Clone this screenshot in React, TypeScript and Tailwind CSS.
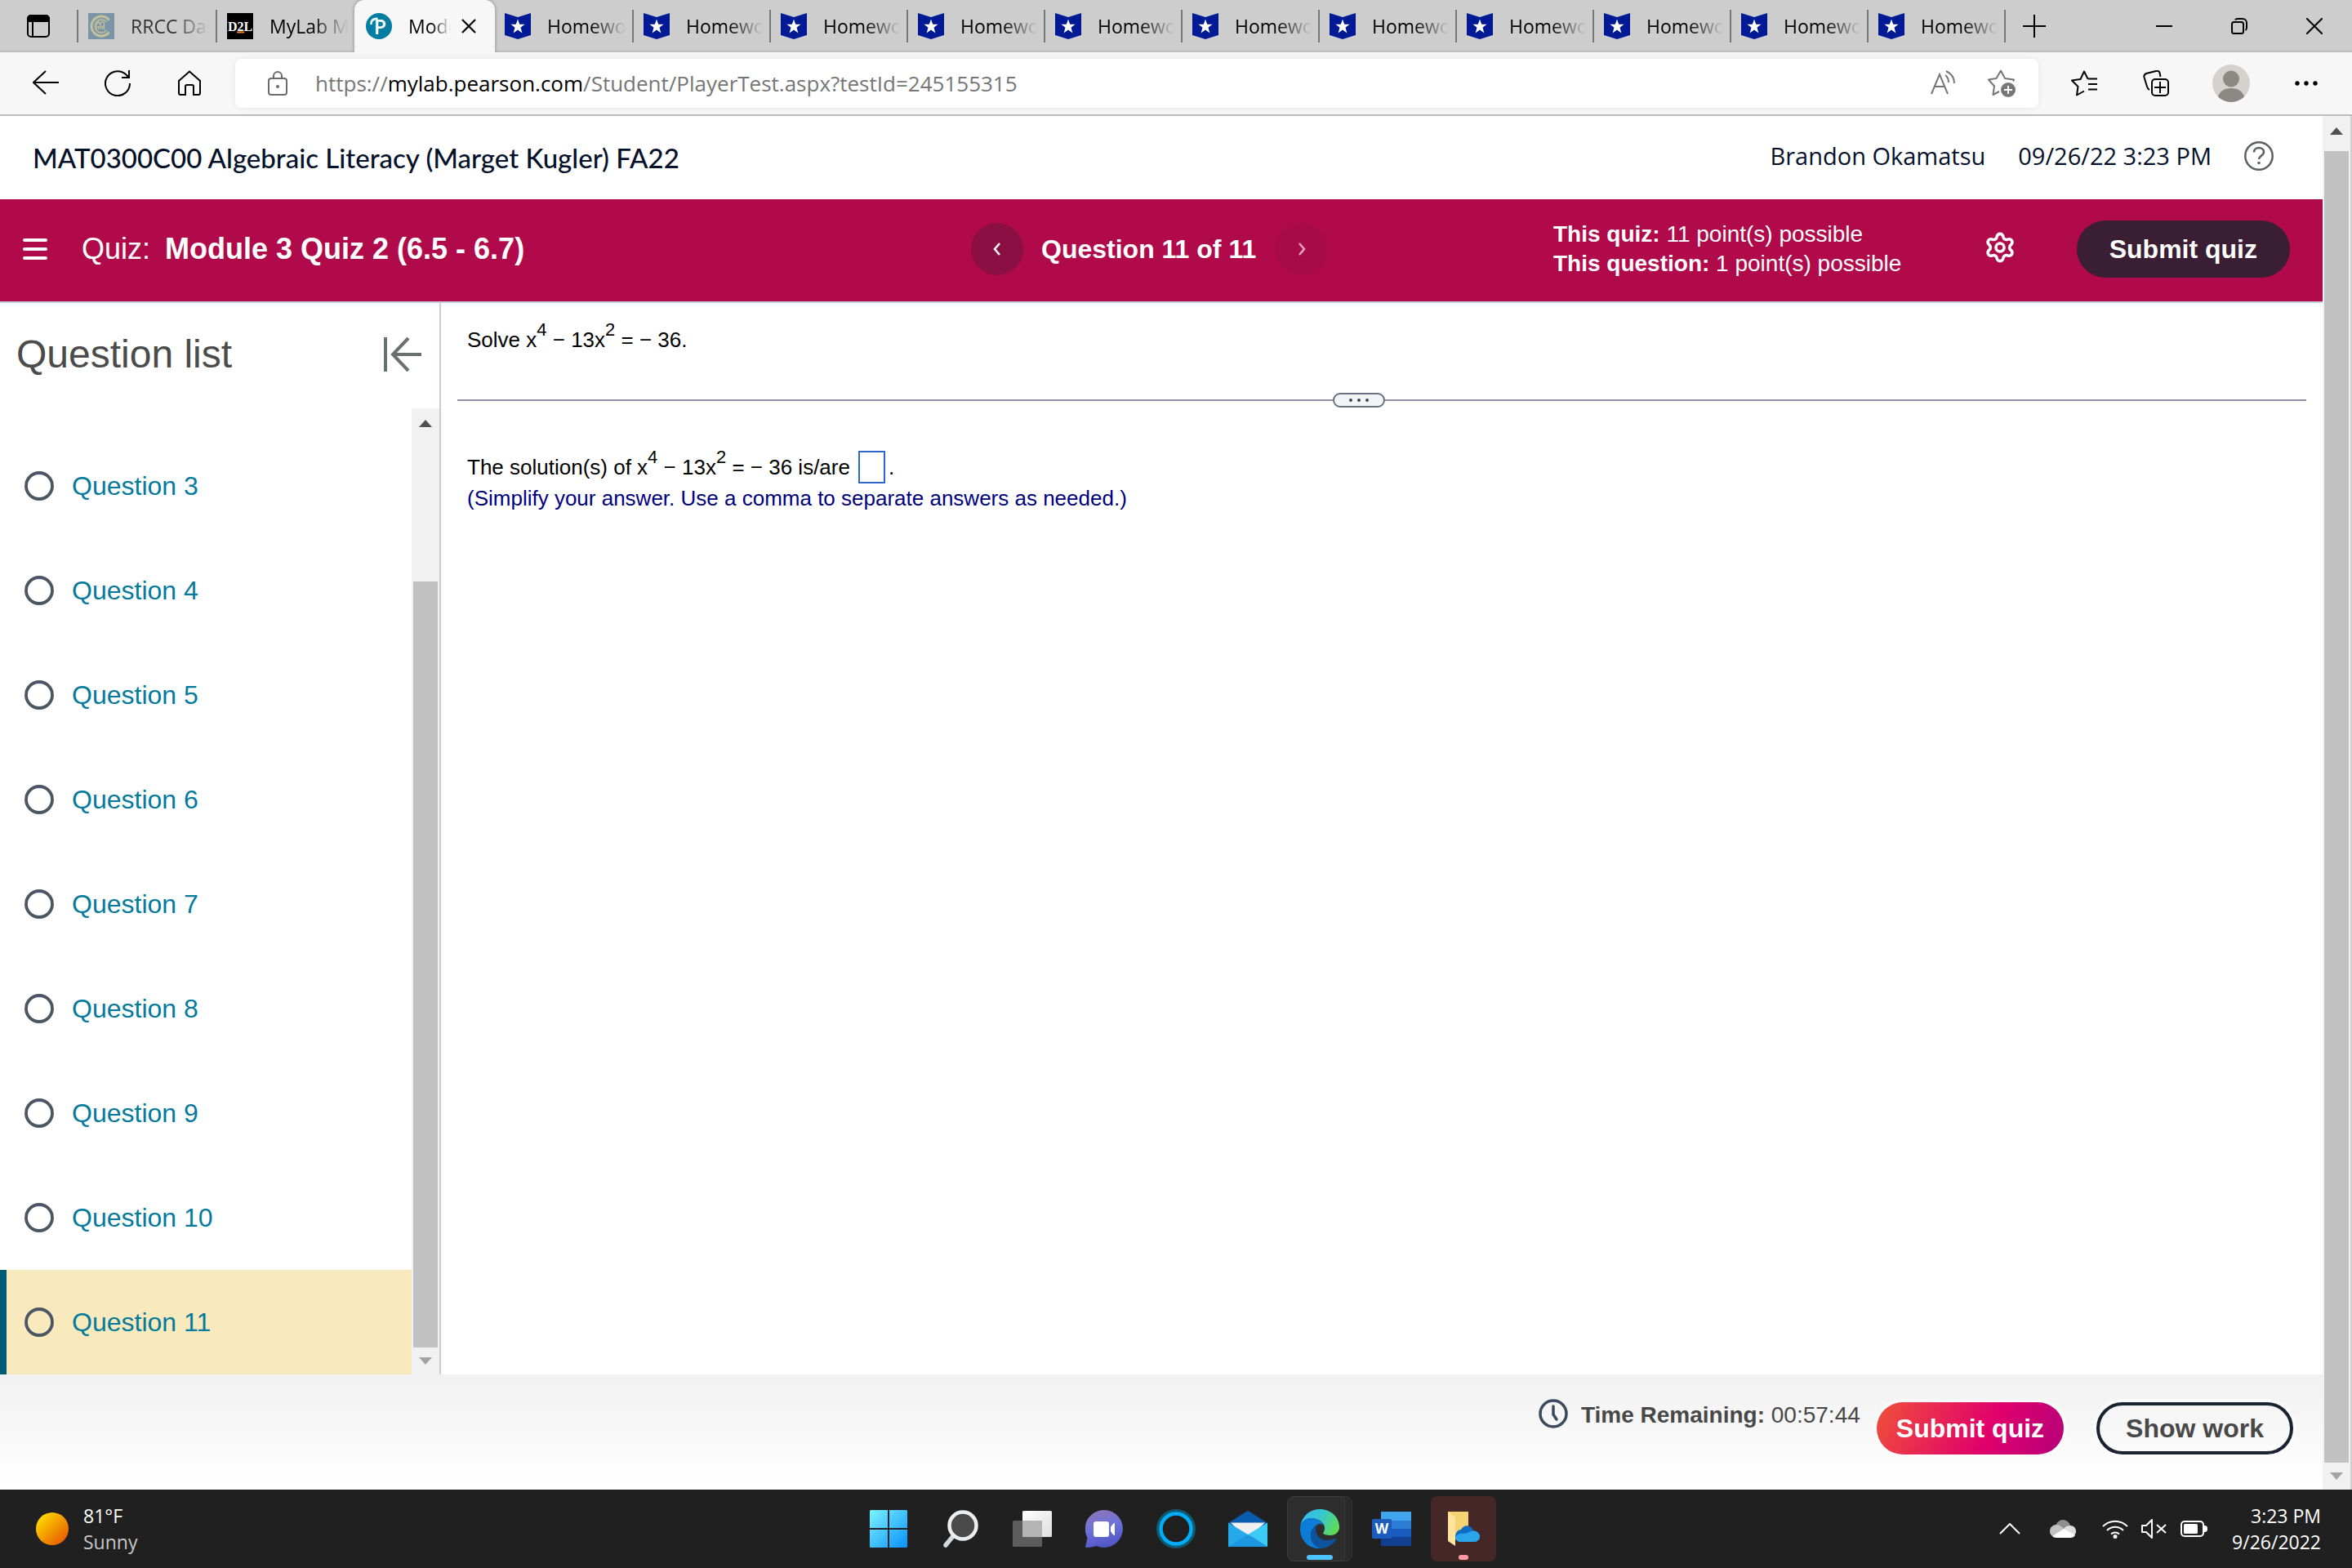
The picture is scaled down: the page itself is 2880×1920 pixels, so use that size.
import type { ReactNode } from 'react'
import { Settings } from 'lucide-react'

const questions = [3, 4, 5, 6, 7, 8, 9, 10, 11]
const currentQuestion = 11
const homeworkTabs = Array.from({ length: 11 }, (_, i) => i)

/* ---------- browser tab strip ---------- */

function RrccIcon() {
  return (
    <svg viewBox="0 0 32 32" className="size-8 shrink-0" fill="none" stroke="#c4c19c">
      <rect width="32" height="32" fill="#7b94a6" stroke="none" />
      <path d="M25.500 8.500a12 12 0 1 0 0 15" strokeWidth="3" />
      <path d="M22.500 11a8 8 0 1 0 0 10" strokeWidth="1.500" />
      <path d="M10 20v-6l2.500-3 2.500 3v6M15 20v-8l2.500-2 2 2v8M9.500 17h10M12.500 20v-4M17.500 20v-5" strokeWidth="1.200" />
    </svg>
  )
}

function D2lIcon() {
  return (
    <svg viewBox="0 0 32 32" className="size-8 shrink-0">
      <rect width="32" height="32" fill="#000" />
      <text x="16" y="21.500" textAnchor="middle" fontFamily="Liberation Serif, serif" fontWeight="bold" fontSize="16" fill="#fff">
        D2L
      </text>
      <rect x="12" y="22.500" width="9" height="2" fill="#f5821f" />
    </svg>
  )
}

function PearsonIcon() {
  return (
    <svg viewBox="0 0 32 32" className="size-8 shrink-0">
      <circle cx="16" cy="16" r="16" fill="#047da3" />
      <text x="17.500" y="26" textAnchor="middle" fontFamily="Open Sans, sans-serif" fontWeight="600" fontSize="25" fill="#fff">
        P
      </text>
      <path d="M6.500 13c0-4 3-6 7-6.200" fill="none" stroke="#fff" strokeWidth="2.500" strokeLinecap="round" />
    </svg>
  )
}

function BadgeIcon() {
  return (
    <svg viewBox="0 0 32 32" className="size-8 shrink-0">
      <path d="M0 0 16 5 32 0v27l-16 5-16-5z" fill="#001a96" />
      <path d="m16 7.500 2.200 6.300h6.300l-5 4 1.900 6.700-5.400-4-5.400 4 1.900-6.700-5-4h6.300z" fill="#fff" />
    </svg>
  )
}

function Tab({ icon, title, faded, className }: { icon: ReactNode; title: string; faded?: boolean; className: string }) {
  return (
    <button className={`flex shrink-0 items-center gap-5 pl-3 pr-2 ${className}`}>
      {icon}
      <span
        className={`min-w-0 flex-1 overflow-hidden text-left text-[23px] leading-8 whitespace-nowrap [mask-image:linear-gradient(to_right,black_55%,transparent)] ${
          faded ? 'text-[#333]' : 'text-black'
        }`}
      >
        {title}
      </span>
    </button>
  )
}

function Separator() {
  return <div className="h-10 w-0.5 shrink-0 self-center bg-[#777]" />
}

function TabStrip() {
  return (
    <div className="flex h-16 items-stretch bg-[#cdcdcd] shadow-[inset_0_-2px_0_#bcbcbc]">
      <button aria-label="Tab actions" className="flex w-[94px] shrink-0 items-center justify-center">
        <svg viewBox="0 0 28 28" className="size-7" fill="none" stroke="#000" strokeWidth="2">
          <rect x="1" y="1" width="26" height="26" rx="4" />
          <path d="M1 8V5a4 4 0 0 1 4-4h18a4 4 0 0 1 4 4v3z" fill="#000" />
          <path d="M7 8v19" />
        </svg>
      </button>
      <Separator />
      <Tab icon={<RrccIcon />} title="RRCC Dashboard" faded className="w-[168px]" />
      <Separator />
      <Tab icon={<D2lIcon />} title="MyLab Math" className="w-[168px]" />
      <div className="flex w-[172px] shrink-0 items-center rounded-t-xl bg-[#f7f7f7] pl-0.5 shadow-[0_0_4px_rgba(0,0,0,0.35)] [clip-path:inset(-4px_-4px_0_-4px)]">
        <Tab icon={<PearsonIcon />} title="Module 3" className="w-[124px]" />
        <button aria-label="Close tab" className="flex h-10 w-7 items-center justify-center">
          <svg viewBox="0 0 18 18" className="size-[18px]" stroke="#000" strokeWidth="2.200">
            <path d="m1 1 16 16M17 1 1 17" />
          </svg>
        </button>
      </div>
      {homeworkTabs.map((n) => (
        <div key={n} className="flex shrink-0">
          <Tab icon={<BadgeIcon />} title="Homework" className={n === 0 ? 'w-[168px]' : 'w-[166px]'} />
          <Separator />
        </div>
      ))}
      <button aria-label="New tab" className="flex w-[70px] items-center justify-center">
        <svg viewBox="0 0 28 28" className="size-7" stroke="#000" strokeWidth="2">
          <path d="M14 0v28M0 14h28" />
        </svg>
      </button>
      <div className="flex-1" />
      <button aria-label="Minimize" className="flex w-[92px] items-center justify-center">
        <svg viewBox="0 0 20 20" className="size-5" stroke="#000" strokeWidth="2">
          <path d="M0 10h20" />
        </svg>
      </button>
      <button aria-label="Restore" className="flex w-[92px] items-center justify-center">
        <svg viewBox="0 0 20 20" className="size-5" fill="none" stroke="#000" strokeWidth="2">
          <rect x="1" y="5" width="14" height="14" rx="2.500" />
          <path d="M5 2.500C5.500 1.500 6.500 1 8 1h6a5 5 0 0 1 5 5v6c0 1.500-.5 2.500-1.500 3" />
        </svg>
      </button>
      <button aria-label="Close" className="flex w-[92px] items-center justify-center">
        <svg viewBox="0 0 20 20" className="size-5" stroke="#000" strokeWidth="2">
          <path d="m0 0 20 20M20 0 0 20" />
        </svg>
      </button>
    </div>
  )
}

/* ---------- toolbar ---------- */

function ToolButton({ label, className = 'w-[88px]', children }: { label: string; className?: string; children: ReactNode }) {
  return (
    <button aria-label={label} className={`flex h-full shrink-0 items-center justify-center ${className}`}>
      {children}
    </button>
  )
}

function Toolbar() {
  return (
    <div className="flex h-[78px] items-center border-b-2 border-[#bdbdbd] bg-[#f7f7f7] px-3">
      <ToolButton label="Back">
        <svg viewBox="0 0 32 32" className="size-8" fill="none" stroke="#000" strokeWidth="2">
          <path d="M32 15H1M16 1 1 15l15 14" />
        </svg>
      </ToolButton>
      <ToolButton label="Refresh">
        <svg viewBox="0 0 32 32" className="size-8" fill="none" stroke="#000" strokeWidth="2">
          <path d="M31 16A15 15 0 1 1 26 5l4 4" />
          <path d="M30 0v9h-9" />
        </svg>
      </ToolButton>
      <ToolButton label="Home">
        <svg viewBox="0 0 32 32" className="size-8" fill="none" stroke="#000" strokeWidth="2">
          <path d="M3 13 16 1.500 29 13v15a2 2 0 0 1-2 2h-6V20a2 2 0 0 0-2-2h-6a2 2 0 0 0-2 2v10H5a2 2 0 0 1-2-2z" />
        </svg>
      </ToolButton>
      <div className="mx-3 flex h-15 flex-1 items-center rounded-lg bg-white shadow-[0_0_8px_rgba(0,0,0,0.08)]">
        <ToolButton label="Site information" className="w-[98px] pl-1.5">
          <svg viewBox="0 0 24 30" className="h-[30px] w-6" fill="none" stroke="#6b6b6b" strokeWidth="2">
            <rect x="1" y="9" width="22" height="20" rx="3" />
            <path d="M7 9V6a5 5 0 0 1 10 0v3" />
            <circle cx="12" cy="19" r="2" fill="#6b6b6b" stroke="none" />
          </svg>
        </ToolButton>
        <div className="flex-1 text-[26px] leading-9 text-[#767676]">
          https://<span className="text-black">mylab.pearson.com</span>/Student/PlayerTest.aspx?testId=245155315
        </div>
        <ToolButton label="Read aloud" className="w-[72px]">
          <svg viewBox="0 0 32 32" className="size-8" fill="none" stroke="#767676" strokeWidth="2">
            <path d="M1 29 11 5l10 24M5 20h12" />
            <path d="M18 6c3 2 4 5 4 9M19 1c6 3 10 8 10 15" />
          </svg>
        </ToolButton>
        <ToolButton label="Add to favorites" className="w-20 pr-2.5">
          <svg viewBox="0 0 34 34" className="size-[34px]" fill="none" stroke="#767676" strokeWidth="2">
            <path d="M14 27 6.500 31 8 20.500 1 12.500l9.500-1.500L16 1.500 21 11l11 1.500-1 2" strokeLinejoin="round" />
            <circle cx="25" cy="25" r="9" fill="#767676" stroke="none" />
            <path d="M25 20v10M20 25h10" stroke="#fff" />
          </svg>
        </ToolButton>
      </div>
      <ToolButton label="Favorites">
        <svg viewBox="0 0 32 32" className="size-8" fill="none" stroke="#000" strokeWidth="2" strokeLinejoin="round">
          <path d="M20.500 10.500 16 1.500l-4.500 9.500L1 12.500 8.500 20 7 30.500l9-5" />
          <path d="M20.500 10.500H32M21 17h11M21 23.500h11" />
        </svg>
      </ToolButton>
      <ToolButton label="Collections">
        <svg viewBox="0 0 32 32" className="size-8" fill="none" stroke="#000" strokeWidth="2">
          <rect x="11" y="11" width="20" height="20" rx="4" />
          <path d="M21 14v14M14 21h14" />
          <path d="M8 24c-2-1-2.500-2-3-4L1.500 8.500C1 6.500 2 5 4 4l12-3c2-.5 4 0 4.500 2l1 5" />
        </svg>
      </ToolButton>
      <ToolButton label="Profile" className="w-24">
        <svg viewBox="0 0 46 46" className="size-[46px]">
          <circle cx="23" cy="23" r="23" fill="#d3d2ce" />
          <circle cx="23" cy="17.500" r="10" fill="#8c8884" />
          <path d="M7 39.500c2-7 8-10.500 16-10.500s14 3.500 16 10.500A23 23 0 0 1 7 39.500z" fill="#8c8884" />
        </svg>
      </ToolButton>
      <ToolButton label="Settings and more">
        <svg viewBox="0 0 28 6" className="h-1.5 w-7" fill="#000">
          <circle cx="3" cy="3" r="2.700" />
          <circle cx="14" cy="3" r="2.700" />
          <circle cx="25" cy="3" r="2.700" />
        </svg>
      </ToolButton>
    </div>
  )
}

/* ---------- quiz page ---------- */

function PageHeader() {
  return (
    <header className="flex h-[102px] shrink-0 items-center pr-15 pl-10 text-[#05112a]">
      <h1 className="flex-1 font-['Lato',sans-serif] text-[33px] leading-10 font-medium">MAT0300C00 Algebraic Literacy (Marget Kugler) FA22</h1>
      <div className="flex items-center pb-1 text-[29px] leading-10">
        <span className="mr-10">Brandon Okamatsu</span>
        <span className="mr-10">09/26/22 3:23 PM</span>
        <button aria-label="Help">
          <svg viewBox="0 0 36 36" className="size-9" fill="none" stroke="#5a6161" strokeWidth="2.500">
            <circle cx="18" cy="18" r="16.700" />
            <path d="M12 13.500c0-3.500 2.500-5.500 6-5.500s6 2 6 5c0 5-6 4.500-6 9" />
            <circle cx="18" cy="26.500" r="1.800" fill="#5a6161" stroke="none" />
          </svg>
        </button>
      </div>
    </header>
  )
}

function QuizBar() {
  return (
    <div className="grid h-[127px] shrink-0 grid-cols-[1189fr_713fr_942fr] items-center border-b-2 border-[#c7cddb] bg-[#b00a4a] pb-1 text-white">
      <div className="flex items-center pl-7 text-4xl">
        <button aria-label="Menu" className="mr-[42px]">
          <svg viewBox="0 0 30 28" className="h-7 w-[30px]" stroke="#fff" strokeWidth="4" strokeLinecap="round">
            <path d="M2 3h26M2 14h26M2 25h26" />
          </svg>
        </button>
        <span>Quiz:</span>
        <span className="ml-4.5 font-bold">Module 3 Quiz 2 (6.5 - 6.7)</span>
      </div>
      <div className="flex items-center">
        <button aria-label="Previous question" className="flex size-16 items-center justify-center rounded-full bg-[#8b0f42]">
          <svg viewBox="0 0 10 16" className="h-4 w-2.5" fill="none" stroke="#fff" strokeWidth="2.500">
            <path d="M8 1 2 8l6 7" />
          </svg>
        </button>
        <span className="mr-6 ml-[22px] text-[32px] leading-9 font-bold">Question 11 of 11</span>
        <button aria-label="Next question" disabled className="flex size-16 items-center justify-center rounded-full bg-[#a70b48]">
          <svg viewBox="0 0 10 16" className="h-4 w-2.5" fill="none" stroke="#e6a5bd" strokeWidth="2.500">
            <path d="m2 1 6 7-6 7" />
          </svg>
        </button>
      </div>
      <div className="flex items-center pr-10">
        <div className="flex-1 text-[28px] leading-9">
          <div>
            <b>This quiz:</b> 11 point(s) possible
          </div>
          <div>
            <b>This question:</b> 1 point(s) possible
          </div>
        </div>
        <button aria-label="Settings" className="mr-[74px] pb-1">
          <Settings size={40} strokeWidth={2.2} />
        </button>
        <button className="h-[70px] rounded-full bg-[#3a1e33] px-10 text-[32px] leading-9 font-bold">Submit quiz</button>
      </div>
    </div>
  )
}

function ScrollBar({ className, thumb }: { className: string; thumb: ReactNode }) {
  return (
    <div className={`flex shrink-0 flex-col items-stretch bg-[#f1f1f1] px-0.5 ${className}`}>
      <svg viewBox="0 0 16 9" className="mt-3.5 h-[9px] w-4 self-center" fill="#505050">
        <path d="M8 0l8 9H0z" />
      </svg>
      {thumb}
      <svg viewBox="0 0 16 9" className="mb-3 h-[9px] w-4 self-center" fill="#a3a3a3">
        <path d="M8 9 0 0h16z" />
      </svg>
    </div>
  )
}

function QuestionList() {
  return (
    <aside className="flex w-[540px] shrink-0 flex-col border-r-2 border-[#c7cddb]">
      <div className="flex h-[129px] shrink-0 items-center justify-between pr-[22px] pb-1 pl-5">
        <h2 className="text-5xl text-[#4b4b4b]">Question list</h2>
        <button aria-label="Collapse question list">
          <svg viewBox="0 0 46 42" className="h-[42px] w-[46px]" fill="none" stroke="#6a7070" strokeWidth="4">
            <path d="M2 0v42M46 21H11M30 1 11 21l19 20" />
          </svg>
        </button>
      </div>
      <div className="flex min-h-0 flex-1">
        <ul className="flex min-h-0 flex-1 flex-col justify-end overflow-hidden">
          {questions.map((n) => (
            <li
              key={n}
              className={`flex h-32 shrink-0 items-center border-l-8 pl-[22px] ${
                n === currentQuestion ? 'border-[#005a76] bg-[#f8eabc]' : 'border-transparent'
              }`}
            >
              <svg viewBox="0 0 36 36" className="mr-[22px] size-9" fill="none" stroke="#4a5663" strokeWidth="3.800">
                <circle cx="18" cy="18" r="16" />
              </svg>
              <a href={`#question-${n}`} className="text-[32px] leading-9 text-[#047a9c]">
                Question {n}
              </a>
            </li>
          ))}
        </ul>
        <ScrollBar
          className="w-[34px]"
          thumb={
            <div className="flex flex-1 flex-col">
              <div className="flex-[189]" />
              <div className="mb-3 flex-[938] bg-[#c1c1c1]" />
            </div>
          }
        />
      </div>
    </aside>
  )
}

function Equation() {
  return (
    <span className="whitespace-nowrap">
      x<sup className="text-[22px] -top-3.5">4</sup> − 13x<sup className="text-[22px] -top-3.5">2</sup> = − 36
    </span>
  )
}

function QuestionPane() {
  return (
    <main className="flex-1 pt-[27px] text-[26px] leading-9 text-black">
      <p className="pl-8">
        Solve <Equation />.
      </p>
      <div className="mt-[47px] flex items-center pr-5 pl-5">
        <div className="h-0.5 flex-[1072] bg-[#8a91a6]" />
        <button aria-label="Resize panes" className="flex h-[18px] w-16 items-center justify-center gap-1.5 rounded-full border-2 border-[#66707f] bg-[#f3f4f7]">
          <span className="size-1 rounded-full bg-[#444]" />
          <span className="size-1 rounded-full bg-[#444]" />
          <span className="size-1 rounded-full bg-[#444]" />
        </button>
        <div className="h-0.5 flex-[1128] bg-[#8a91a6]" />
      </div>
      <div className="mt-[53px] flex h-10 items-center pl-8">
        <label htmlFor="answer">
          The solution(s) of <Equation /> is/are
        </label>
        <input id="answer" type="text" className="mr-1 ml-2.5 h-10 w-[33px] border-2 border-[#2f66cc]" />.
      </div>
      <p className="pl-8 text-[#00007f]">(Simplify your answer. Use a comma to separate answers as needed.)</p>
    </main>
  )
}

function QuizFooter() {
  return (
    <footer className="flex h-[141px] shrink-0 items-start justify-end bg-linear-to-b from-[#f1f1f1] to-white pt-[30px] pr-9 text-[#484848]">
      <div className="flex items-start">
        <svg viewBox="0 0 36 36" className="mr-4 size-9" fill="none" stroke="#3b4a5c" strokeWidth="3.500">
          <circle cx="18" cy="18" r="16" />
          <path d="M18 9v10l4 6" strokeLinecap="round" strokeLinejoin="round" />
        </svg>
        <p className="pt-0.5 text-[28px] leading-9">
          <b>Time Remaining:</b> <span>00:57:44</span>
        </p>
      </div>
      <button className="mt-1 ml-5 h-16 rounded-full bg-linear-[115deg,#f0503a,#e0006c_60%,#b5007a] px-6 text-[32px] leading-9 font-bold text-white ring-4 ring-white/50">
        Submit quiz
      </button>
      <button className="mt-1 ml-10 h-16 rounded-full border-4 border-[#1a2332] px-8 text-[32px] leading-9 font-bold ring-4 ring-white/50">
        Show work
      </button>
    </footer>
  )
}

/* ---------- taskbar ---------- */

function TaskIcon({ label, className = '', children }: { label: string; className?: string; children: ReactNode }) {
  return (
    <button aria-label={label} className={`relative flex size-20 items-center justify-center rounded-lg ${className}`}>
      {children}
    </button>
  )
}

function Taskbar() {
  return (
    <div className="grid h-24 shrink-0 grid-cols-[1fr_auto_1fr] items-center bg-[#202020] text-[23px] leading-8 text-white">
      <div className="flex items-center pl-11">
        <svg viewBox="0 0 40 40" className="mr-[18px] size-10">
          <defs>
            <linearGradient id="sun" x1="0" y1="0" x2="1" y2="1">
              <stop offset="0.1" stopColor="#ffdc00" />
              <stop offset="0.900" stopColor="#e65a00" />
            </linearGradient>
          </defs>
          <circle cx="20" cy="20" r="20" fill="url(#sun)" />
        </svg>
        <div>
          <div>81°F</div>
          <div className="text-[#c8c8c8]">Sunny</div>
        </div>
      </div>

      <div className="flex gap-2">
        <TaskIcon label="Start">
          <svg viewBox="0 0 46 46" className="size-[46px]">
            <defs>
              <linearGradient id="win" gradientUnits="userSpaceOnUse" x1="0" y1="0" x2="46" y2="46">
                <stop offset="0" stopColor="#7df4ff" />
                <stop offset="1" stopColor="#0890ff" />
              </linearGradient>
            </defs>
            <path d="M1 0h21v22H0V1zM24 0h21l1 1v21H24zM0 24h22v22H1l-1-1zM24 24h22v21l-1 1H24z" fill="url(#win)" />
          </svg>
        </TaskIcon>
        <TaskIcon label="Search">
          <svg viewBox="0 0 43 46" className="h-[46px] w-[43px]">
            <path d="M12 32 3 43" stroke="#d5d8da" strokeWidth="5.500" strokeLinecap="round" />
            <circle cx="24" cy="19" r="16.500" fill="#4a4a4a" stroke="#eceeef" strokeWidth="4.500" />
          </svg>
        </TaskIcon>
        <TaskIcon label="Task view">
          <svg viewBox="0 0 48 44" className="h-11 w-12">
            <defs>
              <linearGradient id="tv" x1="0" y1="0" x2="1" y2="1">
                <stop offset="0" stopColor="#fff" />
                <stop offset="1" stopColor="#dedede" />
              </linearGradient>
            </defs>
            <rect y="12" width="36" height="32" rx="1.500" fill="#5d5d5d" />
            <rect x="12" width="36" height="32" rx="1.500" fill="url(#tv)" />
            <path d="M12 12h24v20H12z" fill="#b5b5b5" />
          </svg>
        </TaskIcon>
        <TaskIcon label="Chat">
          <svg viewBox="0 0 46 46" className="size-[46px]">
            <defs>
              <linearGradient id="chat" x1="0.200" y1="0" x2="0.500" y2="1">
                <stop offset="0" stopColor="#9275b8" />
                <stop offset="0.500" stopColor="#6a72d8" />
                <stop offset="1" stopColor="#5155c6" />
              </linearGradient>
            </defs>
            <path d="M23 0a23 23 0 1 1-9.500 44C9 45.500 4 46 1 46c-1 0-1-1-.7-2l2.200-10A23 23 0 0 1 23 0z" fill="url(#chat)" />
            <rect x="10" y="14" width="19" height="19" rx="3" fill="#fff" />
            <path d="M31 21c1.500-2.500 3-4.500 5-5.500v16c-2-1-3.500-3-5-5.500z" fill="#fff" />
          </svg>
        </TaskIcon>
        <TaskIcon label="Cortana">
          <svg viewBox="0 0 48 48" className="size-12" fill="none">
            <circle cx="24" cy="24" r="22" stroke="#13586f" strokeWidth="4" />
            <circle cx="24" cy="24" r="18.500" stroke="#00adf8" strokeWidth="4.500" />
          </svg>
        </TaskIcon>
        <TaskIcon label="Mail">
          <svg viewBox="0 0 48 44" className="h-11 w-12">
            <path d="M0 15 22 1c1.500-1 2.500-1 4 0l22 14v4H0z" fill="#0a5cb0" />
            <path d="M3 14.500h42L26 32h-6z" fill="#f0f0f0" />
            <path d="M0 14.500 24 29 48 44H0z" fill="#27a8ea" />
            <path d="M24 29 48 14.500V44z" fill="#3accf6" />
            <path d="M0 44 24 29l24 15z" fill="#1d97e2" />
          </svg>
        </TaskIcon>
        <TaskIcon label="Edge">
          <span className="absolute inset-y-0 right-0 w-8 rounded-lg border border-[#333] bg-[#2a2a2a]" />
          <span className="absolute inset-y-0 left-0 w-[71px] rounded-lg border border-[#3c3c3c] bg-[#2d2d2d]" />
          <svg viewBox="0 0 48 48" className="relative size-12">
            <defs>
              <linearGradient id="edgeTop" x1="0" y1="0.300" x2="1" y2="0.700">
                <stop offset="0" stopColor="#38b8f0" />
                <stop offset="0.450" stopColor="#35c8d0" />
                <stop offset="1" stopColor="#62dc4c" />
              </linearGradient>
            </defs>
            <path d="M0 22C2 8 12 0 24 0c14 0 24 10 24 22 0 6-5 10-11 10-5 0-8-1-9-2.500 1-1.500 2-3.500 2-6.500 0-7-8-12-16-12C7 11 2 15 0 22z" fill="url(#edgeTop)" />
            <path d="M0 24c0-8 6-13 14-13 7 0 13 4 15 9-2-2-4-2-6-2-6 2-10 8-10 14 0 8 5 14 14 15.800C12 50 0 39 0 24z" fill="#0c7cd6" />
            <path d="M23 18c-6 2-10 8-10 14 0 9 6 16 14 16 8-1 14-6 17-11 0-1-1-1.500-2-1-3 1.500-6 2-9 2-8 0-14-6-14-13 0-3 1-6 4-7z" fill="#0d539e" />
          </svg>
          <span className="absolute bottom-0.5 left-6 h-1.5 w-8 rounded-full bg-[#4cc2ff]" />
        </TaskIcon>
        <TaskIcon label="Word">
          <svg viewBox="0 0 48 42" className="h-[42px] w-12">
            <path d="M11 0h37v11H11z" fill="#41a5ee" />
            <path d="M11 11h37v10H11z" fill="#2b7cd3" />
            <path d="M11 21h37v10H11z" fill="#185abd" />
            <path d="M11 31h37v11H11z" fill="#103f91" />
            <rect y="9" width="24" height="24" rx="2" fill="#1b5cbe" />
            <text x="12" y="27" textAnchor="middle" fontFamily="Open Sans, sans-serif" fontWeight="bold" fontSize="17" fill="#fff">
              W
            </text>
          </svg>
        </TaskIcon>
        <TaskIcon label="File Explorer" className="bg-[#452728]">
          <svg viewBox="0 0 39 42" className="h-[42px] w-[39px]">
            <path d="M0 0h25v34H0z" fill="#f5d274" />
            <path d="m0 0 9 7v35l-9-6z" fill="#ffe49c" />
            <path d="M9 31c0-6 4-9 7-9 2-4 6-5.500 9-4.500 4 1 5 4 6.500 6 4 0 7.500 3 7.500 7s-3 6.500-7 6.500H15c-4 0-6-3-6-6z" fill="#0f6cc4" />
            <path d="M9 31c2-3 6-5 10-4l5-1c3-2 6-2.500 8-2.500 4 .5 7 3.500 7 7s-3 6.500-7 6.500H15c-3 0-5-2-6-6z" fill="#2ba5ea" />
          </svg>
          <span className="absolute bottom-0.5 left-[34px] h-1.5 w-3 rounded-full bg-[#ff99a4]" />
        </TaskIcon>
      </div>

      <div className="flex items-center justify-end pr-[38px]">
        <svg viewBox="0 0 26 14" className="mr-9 h-3.5 w-[26px]" fill="none" stroke="#fff" strokeWidth="2">
          <path d="M1 13 13 1l12 12" />
        </svg>
        <svg viewBox="0 0 32 22" className="mr-8 h-[22px] w-8">
          <path d="M7 8c1-5 5-8 9-8s8 3 9 7l-9 6z" fill="#8f8f8f" />
          <path d="M0 14c0-5 4-8 8-8 4 0 6 2 9 5l-10 10C3 21 0 18 0 14z" fill="#c2c2c2" />
          <path d="M17 11c2-3 5-4 8-4 4 0 7 3 7 7s-3 7-7 7z" fill="#dedede" />
          <path d="M3 20 17 11l14 8c-1.500 2-3 3-6 3H8c-2 0-4-1-5-2z" fill="#fff" />
        </svg>
        <svg viewBox="0 0 32 24" className="mr-4 h-6 w-8" fill="none" stroke="#fff" strokeWidth="2">
          <path d="M1 9a21 21 0 0 1 30 0M6 14a14 14 0 0 1 20 0M11 18.500a7 7 0 0 1 10 0" />
          <circle cx="16" cy="21.500" r="2.500" fill="#fff" stroke="none" />
        </svg>
        <svg viewBox="0 0 32 24" className="mr-4 h-6 w-8" fill="none" stroke="#fff" strokeWidth="2" strokeLinejoin="round">
          <path d="M1 8h5l7-7v22l-7-7H1z" />
          <path d="m19 7 11 10M30 7 19 17" />
        </svg>
        <svg viewBox="0 0 33 20" className="mr-[30px] h-5 w-[33px]">
          <rect x="1" y="1" width="27" height="18" rx="4" fill="none" stroke="#fff" strokeWidth="2" />
          <rect x="4" y="4" width="17" height="12" rx="1.500" fill="#fff" />
          <path d="M29 6c3 0 4 1 4 4s-1 4-4 4z" fill="#fff" />
        </svg>
        <div className="text-right">
          <div>3:23 PM</div>
          <div>9/26/2022</div>
        </div>
      </div>
    </div>
  )
}

export default function App() {
  return (
    <div className="flex h-screen flex-col overflow-hidden bg-white font-['Open_Sans','Noto_Sans',sans-serif]">
      <TabStrip />
      <Toolbar />
      <div className="flex min-h-0 flex-1">
        <div className="flex min-w-0 flex-1 flex-col">
          <PageHeader />
          <div className="flex min-h-0 flex-1 flex-col font-['Liberation_Sans',Arial,sans-serif]">
            <QuizBar />
            <div className="flex min-h-0 flex-1">
              <QuestionList />
              <QuestionPane />
            </div>
            <QuizFooter />
          </div>
        </div>
        <ScrollBar className="w-9 border-r-2 border-[#cfcfcf]" thumb={<div className="mt-5 mb-3 flex-1 bg-[#c1c1c1]" />} />
      </div>
      <Taskbar />
    </div>
  )
}
